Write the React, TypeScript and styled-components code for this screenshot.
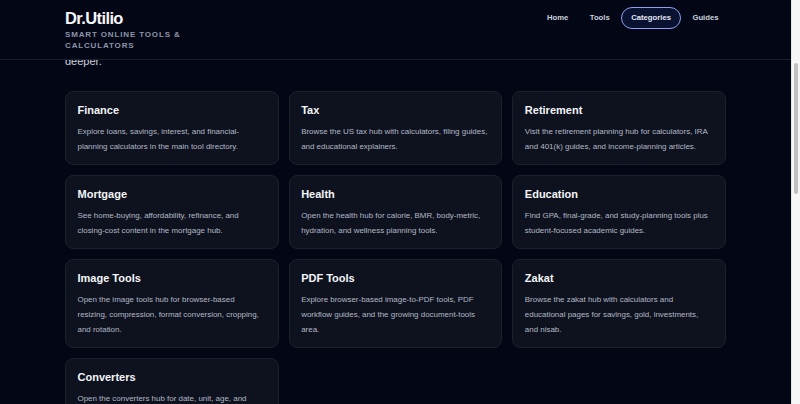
import styled, { createGlobalStyle } from 'styled-components';

type Category = {
  name: string;
  blurb: string;
};

const categories: Category[] = [
  {
    name: 'Finance',
    blurb:
      'Explore loans, savings, interest, and financial-planning calculators in the main tool directory.',
  },
  {
    name: 'Tax',
    blurb:
      'Browse the US tax hub with calculators, filing guides, and educational explainers.',
  },
  {
    name: 'Retirement',
    blurb:
      'Visit the retirement planning hub for calculators, IRA and 401(k) guides, and income-planning articles.',
  },
  {
    name: 'Mortgage',
    blurb:
      'See home-buying, affordability, refinance, and closing-cost content in the mortgage hub.',
  },
  {
    name: 'Health',
    blurb:
      'Open the health hub for calorie, BMR, body-metric, hydration, and wellness planning tools.',
  },
  {
    name: 'Education',
    blurb:
      'Find GPA, final-grade, and study-planning tools plus student-focused academic guides.',
  },
  {
    name: 'Image Tools',
    blurb:
      'Open the image tools hub for browser-based resizing, compression, format conversion, cropping, and rotation.',
  },
  {
    name: 'PDF Tools',
    blurb:
      'Explore browser-based image-to-PDF tools, PDF workflow guides, and the growing document-tools area.',
  },
  {
    name: 'Zakat',
    blurb:
      'Browse the zakat hub with calculators and educational pages for savings, gold, investments, and nisab.',
  },
  {
    name: 'Converters',
    blurb:
      'Open the converters hub for date, unit, age, and everyday conversion tools.',
  },
];

const navItems = ['Home', 'Tools', 'Categories', 'Guides'];

export default function App() {
  return (
    <>
      <GlobalStyle />
      <Shell>
        <Viewport>
          {/* sticky site header, drawn over the scrolled page */}
          <Header>
            <HeaderInner>
              <Brand>
                <Logo>Dr.Utilio</Logo>
                <Tagline>Smart online tools &amp; calculators</Tagline>
              </Brand>
              <Nav>
                {navItems.map((item) => (
                  <NavLink key={item} $active={item === 'Categories'}>
                    {item}
                  </NavLink>
                ))}
              </Nav>
            </HeaderInner>
          </Header>

          <Main>
            <Intro>
              Pick a category hub to find calculators, guides and explainers, then go
              <br />
              deeper.
            </Intro>
            <Grid>
              {categories.map((cat) => (
                <Card key={cat.name}>
                  <CardTitle>{cat.name}</CardTitle>
                  <CardText>{cat.blurb}</CardText>
                </Card>
              ))}
            </Grid>
          </Main>
        </Viewport>
        <ScrollTrack>
          <ScrollThumb />
        </ScrollTrack>
      </Shell>
    </>
  );
}

const GlobalStyle = createGlobalStyle`
  html, body {
    margin: 0;
    padding: 0;
    background: #030615;
    overflow: hidden;
  }
  * {
    box-sizing: border-box;
  }
`;

const Shell = styled.div`
  display: flex;
  width: 800px;
  height: 404px;
  font-family: 'Liberation Sans', Arial, sans-serif;
`;

const Viewport = styled.div`
  position: relative;
  flex: 1;
  height: 100%;
  overflow: hidden;
  background: #030615;
`;

const Header = styled.header`
  position: absolute;
  top: 0;
  left: 0;
  right: 0;
  height: 60px;
  z-index: 2;
  background: #030615;
  border-bottom: 1px solid #1a1f2e;
`;

const HeaderInner = styled.div`
  display: flex;
  align-items: flex-start;
  justify-content: space-between;
  width: 666px;
  margin: 0 auto;
  padding: 6.5px 0 0 2.5px;
`;

const Brand = styled.div`
  display: flex;
  flex-direction: column;
  width: 130px;
`;

const Logo = styled.div`
  color: #f5f6fa;
  font-size: 16.5px;
  font-weight: 700;
  letter-spacing: -0.6px;
  line-height: 22px;
`;

const Tagline = styled.div`
  margin-top: 0.5px;
  color: #8d95a8;
  font-size: 8px;
  font-weight: 700;
  letter-spacing: 0.85px;
  line-height: 11px;
  text-transform: uppercase;
`;

const Nav = styled.nav`
  display: flex;
  align-items: center;
  gap: 1.5px;
`;

const NavLink = styled.a<{ $active?: boolean }>`
  display: flex;
  align-items: center;
  height: 22px;
  padding: 0 9px;
  border-radius: 999px;
  color: ${(p) => (p.$active ? '#e6e9f2' : '#ccd1dd')};
  font-size: 7.7px;
  font-weight: 700;
  background: ${(p) => (p.$active ? '#0a1232' : 'transparent')};
  border: 1.5px solid ${(p) => (p.$active ? '#8f9ff0' : 'transparent')};
  cursor: pointer;
`;

const Main = styled.main`
  width: 661px;
  margin: 0 auto;
  padding-top: 34px;
`;

const Intro = styled.p`
  margin: 0;
  color: #cdd2dd;
  font-size: 11px;
  line-height: 18px;
  white-space: nowrap;
`;

const Grid = styled.div`
  display: grid;
  grid-template-columns: repeat(3, 1fr);
  gap: 10px;
  margin-top: 21px;
`;

const Card = styled.div`
  padding: 10px 13.5px 10px 11.5px;
  background: #0e121e;
  border: 1px solid #1b202d;
  border-radius: 8px;
`;

const CardTitle = styled.h3`
  margin: 0;
  color: #f4f5f8;
  font-size: 11px;
  font-weight: 700;
  line-height: 16px;
`;

const CardText = styled.p`
  margin: 6px 0 0;
  color: #b2b8c6;
  font-size: 7.95px;
  line-height: 15px;
`;

const ScrollTrack = styled.div`
  display: flex;
  justify-content: center;
  width: 9px;
  height: 100%;
  padding-top: 63px;
  background: #f6f6f6;
  border-left: 1px solid #e4e4e4;
`;

const ScrollThumb = styled.div`
  width: 4px;
  height: 131px;
  border-radius: 2px;
  background: #c1c1c1;
`;
